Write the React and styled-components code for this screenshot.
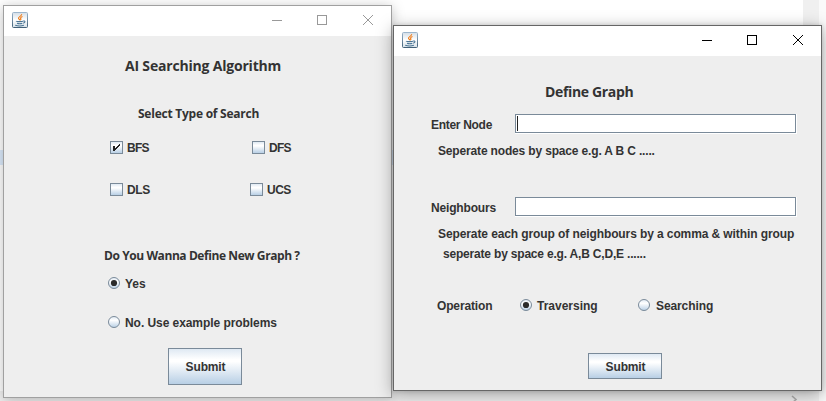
import React from "react";
import styled, { createGlobalStyle, css } from "styled-components";

const GlobalStyle = createGlobalStyle`
  * { box-sizing: border-box; }
  body { margin: 0; overflow: hidden; background: #fff; }
`;

const Desktop = styled.main`
  position: relative;
  width: 826px;
  height: 401px;
  overflow: hidden;
  background: #fff;
  color: #333;
  font: bold 12px "Liberation Sans", Arial, sans-serif;
`;

const ScrollTrack = styled.div`
  position: absolute;
  left: 803px;
  top: 0;
  width: 23px;
  height: 401px;
  background: linear-gradient(90deg, #f0f0f0 16px, #fafafa 16px);
`;

const BottomTrack = styled.div`
  position: absolute;
  left: 0;
  top: 391px;
  width: 803px;
  height: 10px;
  background: #f0f0f0;
`;

const Selection = styled.div`
  position: absolute;
  left: 0;
  top: 150px;
  width: 393px;
  height: 15px;
  background: #dcebfc;
`;

const ScrollArrow = styled.svg`
  position: absolute;
  left: 790px;
  top: 395px;
`;

const Frame = styled.section`
  position: absolute;
  left: ${(p) => p.$x}px;
  top: ${(p) => p.$y}px;
  width: ${(p) => p.$w}px;
  height: ${(p) => p.$h}px;
  display: flex;
  flex-direction: column;
  background: #eee;
  border: 1px solid ${(p) => (p.$active ? "#666" : "#a0a0a0")};
  box-shadow: ${(p) =>
    p.$active
      ? "0 4px 16px rgba(0,0,0,.34), 0 0 4px rgba(0,0,0,.14)"
      : "0 2px 12px rgba(0,0,0,.26)"};
`;

const TitleBar = styled.header`
  flex: none;
  height: 30px;
  padding: 6px 0 0 8px;
  display: flex;
  justify-content: space-between;
  background: #fff;
  color: ${(p) => (p.$active ? "#000" : "#999")};
`;

const WindowControls = styled.div`
  display: flex;
  margin-top: -6px;
`;

const Control = styled.svg`
  width: 46px;
  height: 30px;
  fill: none;
  stroke: currentColor;
`;

const Row = styled.div`
  flex: none;
  display: flex;
  align-items: center;
  height: ${(p) => p.$h || 20}px;
  margin-top: ${(p) => p.$top || 0}px;
  padding-left: ${(p) => p.$left}px;
`;

const Label = styled.span`
  flex: none;
  width: ${(p) => (p.$w ? `${p.$w}px` : "auto")};
  padding-top: ${(p) => (p.$low ? 2 : 0)}px;
  line-height: 14px;
  white-space: nowrap;
  letter-spacing: ${(p) => p.$track || 0}px;
`;

const Heading = styled.h1`
  margin: 0;
  font: bold ${(p) => p.$size}px/20px "Open Sans", "Noto Sans", sans-serif;
  letter-spacing: ${(p) => p.$track || 0}px;
  white-space: nowrap;
`;

const Choice = styled.label`
  flex: none;
  display: flex;
  align-items: center;
  gap: ${(p) => p.$gap}px;
  width: ${(p) => (p.$w ? `${p.$w}px` : "auto")};
`;

const metal = css`
  background: linear-gradient(#dfe9f3 0, #fff 30%, #fff 36%, #b8cfe5 100%);
`;

const CheckSquare = styled.span`
  display: block;
  width: 13px;
  height: 13px;
  border: 1px solid #7a8a99;
  ${metal}
  svg { display: block; }
`;

const Button = styled.button`
  width: 74px;
  height: ${(p) => p.$h}px;
  padding: ${(p) => (p.$low ? 2 : 0)}px 0 0 1px;
  border: 1px solid #7a8a99;
  border-radius: 0;
  color: #333;
  font: inherit;
  letter-spacing: -0.15px;
  ${metal}
`;

const Field = styled.div`
  width: 282px;
  height: 20px;
  border-right: 1px solid #fff;
  border-bottom: 1px solid #fff;
`;

const FieldInner = styled.div`
  height: 19px;
  padding: 1px;
  border: 1px solid #7a8a99;
  background: #fff;
`;

const Caret = styled.div`
  width: 1px;
  height: 15px;
  background: #222;
`;

function JavaIcon() {
  return (
    <svg width="16" height="16" viewBox="0 0 16 16">
      <defs>
        <linearGradient id="tile" x1="0" y1="0" x2="0" y2="1">
          <stop offset="0" stopColor="#d3dde6" />
          <stop offset=".5" stopColor="#fff" />
          <stop offset="1" stopColor="#d5dfe6" />
        </linearGradient>
        <linearGradient id="edge" x1="0" y1="0" x2="0" y2="1">
          <stop offset="0" stopColor="#9bb5cc" />
          <stop offset="1" stopColor="#426078" />
        </linearGradient>
      </defs>
      <rect x=".5" y=".5" width="15" height="15" rx="1" fill="url(#tile)" stroke="url(#edge)" />
      <path d="M9.7 2.2C10 4 6.4 4.7 6.5 6.2c0 .9 1.1 1.1 1.5 2M10.5 4.6c-2.1.8-2.3 1.5-1.6 2.3.3.5 0 1-.6 1.4" fill="none" stroke="#f07b16" strokeWidth="1.1" />
      <path d="M4.5 9.3c-.8.4 5.2.5 6.5 0M5 11.3c1.4.5 4 .5 5.3 0M3.2 13.3c2 .6 6.8.6 8.7 0M11.2 9.1c2-.7 2.6 1.3 0 2.1" fill="none" stroke="#4b7595" strokeWidth="1.15" />
    </svg>
  );
}

function Window({ x, y, w, h, active, children }) {
  return (
    <Frame $x={x} $y={y} $w={w} $h={h} $active={active}>
      <TitleBar $active={active}>
        <JavaIcon />
        <WindowControls>
          <Control viewBox="0 0 46 30"><path d="M19 14.5h10" /></Control>
          <Control viewBox="0 0 46 30"><rect x="18.5" y="9.5" width="9" height="9" /></Control>
          <Control viewBox="0 0 46 30"><path d="M18 9l10 10m0-10l-10 10" /></Control>
        </WindowControls>
      </TitleBar>
      {children}
    </Frame>
  );
}

function Check({ label, checked, w, track }) {
  return (
    <Choice $gap={4} $w={w}>
      <CheckSquare>
        {checked && (
          <svg width="11" height="11" viewBox="0 0 11 11" shapeRendering="crispEdges">
            <path d="M2 4h2v2h1V5h1V4h1V3h1V2h1v2H8v1H7v1H6v1H5v1H4v1H2z" fill="#222" />
          </svg>
        )}
      </CheckSquare>
      <Label $track={track}>{label}</Label>
    </Choice>
  );
}

function Radio({ label, checked, w, gap = 5, track }) {
  return (
    <Choice $gap={gap} $w={w}>
      <svg width="12" height="12" viewBox="0 0 12 12">
        <defs>
          <linearGradient id="dial" x1="0" y1="0" x2="0" y2="1">
            <stop offset="0" stopColor="#dfe9f3" />
            <stop offset=".35" stopColor="#fff" />
            <stop offset="1" stopColor="#b8cfe5" />
          </linearGradient>
        </defs>
        <circle cx="6" cy="6" r="5.5" fill="url(#dial)" stroke="#7a8a99" />
        {checked && <circle cx="6" cy="6" r="3.1" fill="#2b2b2b" />}
      </svg>
      <Label $low $track={track}>{label}</Label>
    </Choice>
  );
}

function TextField({ focused }) {
  return (
    <Field>
      <FieldInner>{focused && <Caret />}</FieldInner>
    </Field>
  );
}

export default function App() {
  return (
    <Desktop>
      <GlobalStyle />
      <ScrollTrack />
      <BottomTrack />
      <Selection />
      <ScrollArrow width="10" height="8" viewBox="0 0 10 8">
        <path d="M2 1l4 3.5L2 8" fill="none" stroke="#b0b0b0" strokeWidth="1.6" />
      </ScrollArrow>

      <Window x={3} y={5} w={389} h={393}>
        <Row $top={20} $left={121}><Heading $size={14} $track={-0.19}>AI Searching Algorithm</Heading></Row>
        <Row $top={28} $left={134}><Heading as="h2" $size={12} $track={-0.24}>Select Type of Search</Heading></Row>
        <Row $top={17} $left={106} $h={13}>
          <Check label="BFS" checked w={142} track={-0.7} />
          <Check label="DFS" track={-0.7} />
        </Row>
        <Row $top={29} $left={106} $h={13}>
          <Check label="DLS" w={140} track={-0.4} />
          <Check label="UCS" track={-0.5} />
        </Row>
        <Row $top={50} $left={100}><Heading as="h2" $size={12} $track={-0.42}>Do You Wanna Define New Graph ?</Heading></Row>
        <Row $top={11} $left={104} $h={12}><Radio label="Yes" checked /></Row>
        <Row $top={27} $left={104} $h={12}><Radio label="No. Use example problems" track={-0.06} /></Row>
        <Row $top={20} $left={164} $h={37}><Button $h={37}>Submit</Button></Row>
      </Window>

      <Window x={393} y={25} w={429} h={366} active>
        <Row $top={26} $left={151}><Heading $size={14} $track={-0.35}>Define Graph</Heading></Row>
        <Row $top={12} $left={37}><Label $low $w={84} $track={-0.3}>Enter Node</Label><TextField focused /></Row>
        <Row $top={7} $left={44}><Label $track={-0.16}>Seperate nodes by space e.g. A B C .....</Label></Row>
        <Row $top={36} $left={37}><Label $low $w={84} $track={-0.17}>Neighbours</Label><TextField /></Row>
        <Row $top={7} $left={44}><Label $track={-0.1}>Seperate each group of neighbours by a comma &amp; within group</Label></Row>
        <Row $left={49}><Label $track={-0.19}>seperate by space e.g. A,B C,D,E ......</Label></Row>
        <Row $top={35} $left={43} $h={12}>
          <Label $low $w={83} $track={-0.15}>Operation</Label>
          <Radio label="Traversing" checked w={118} />
          <Radio label="Searching" gap={6} track={-0.1} />
        </Row>
        <Row $top={42} $left={194} $h={26}><Button $low $h={26}>Submit</Button></Row>
      </Window>
    </Desktop>
  );
}
